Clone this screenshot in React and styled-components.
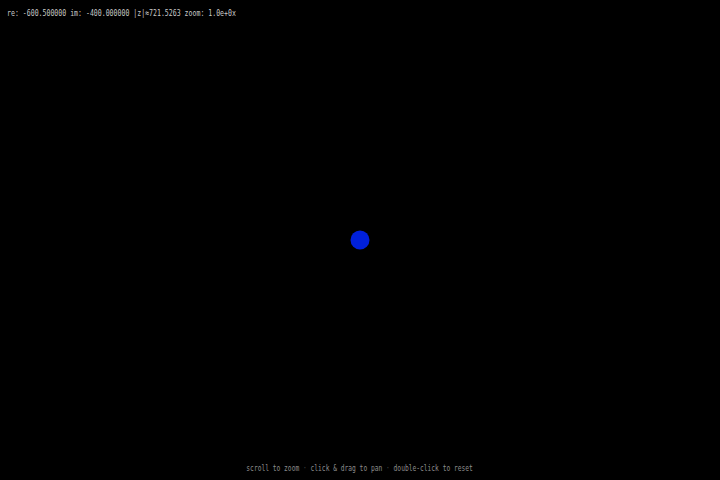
import styled, { createGlobalStyle } from "styled-components";

const Global = createGlobalStyle`
  html, body, #root { margin: 0; padding: 0; height: 100%; }
  body { background: #000; overflow: hidden; }
`;

const Screen = styled.div`
  width: 720px;
  height: 480px;
  background: #000;
  display: flex;
  flex-direction: column;
  font-family: "DejaVu Sans Mono", "Liberation Mono", monospace;
`;

const Readout = styled.div`
  height: 24px;
  padding: 0 7px 2px;
  display: flex;
  align-items: center;
  font-size: 9.5px;
  color: #c8c8c8;
  white-space: pre;
`;

const Condensed = styled.span`
  display: inline-block;
  transform: scaleX(${(p) => p.$scale});
  transform-origin: ${(p) => p.$origin};
`;

const Plane = styled.div`
  flex: 1;
  display: flex;
  align-items: center;
  justify-content: center;
`;

const Hint = styled.div`
  height: 26px;
  display: flex;
  align-items: center;
  justify-content: center;
  font-size: 9.5px;
  color: #8c8c8c;
  white-space: pre;
`;

const Dot = styled.span`
  color: #444;
`;

export default function App() {
  return (
    <Screen>
      <Global />
      <Readout>
        <Condensed $scale={0.69} $origin="left center">
          re: -600.500000 im: -400.000000 |z|≈721.5263 zoom: 1.0e+0x
        </Condensed>
      </Readout>
      <Plane>
        <svg width="20" height="20" viewBox="0 0 20 20">
          <circle cx="10" cy="10" r="9.5" fill="#0020dc" />
        </svg>
      </Plane>
      <Hint>
        <Condensed $scale={0.66} $origin="center">
          scroll to zoom <Dot>·</Dot> click &amp; drag to pan <Dot>·</Dot> double-click to reset
        </Condensed>
      </Hint>
    </Screen>
  );
}
